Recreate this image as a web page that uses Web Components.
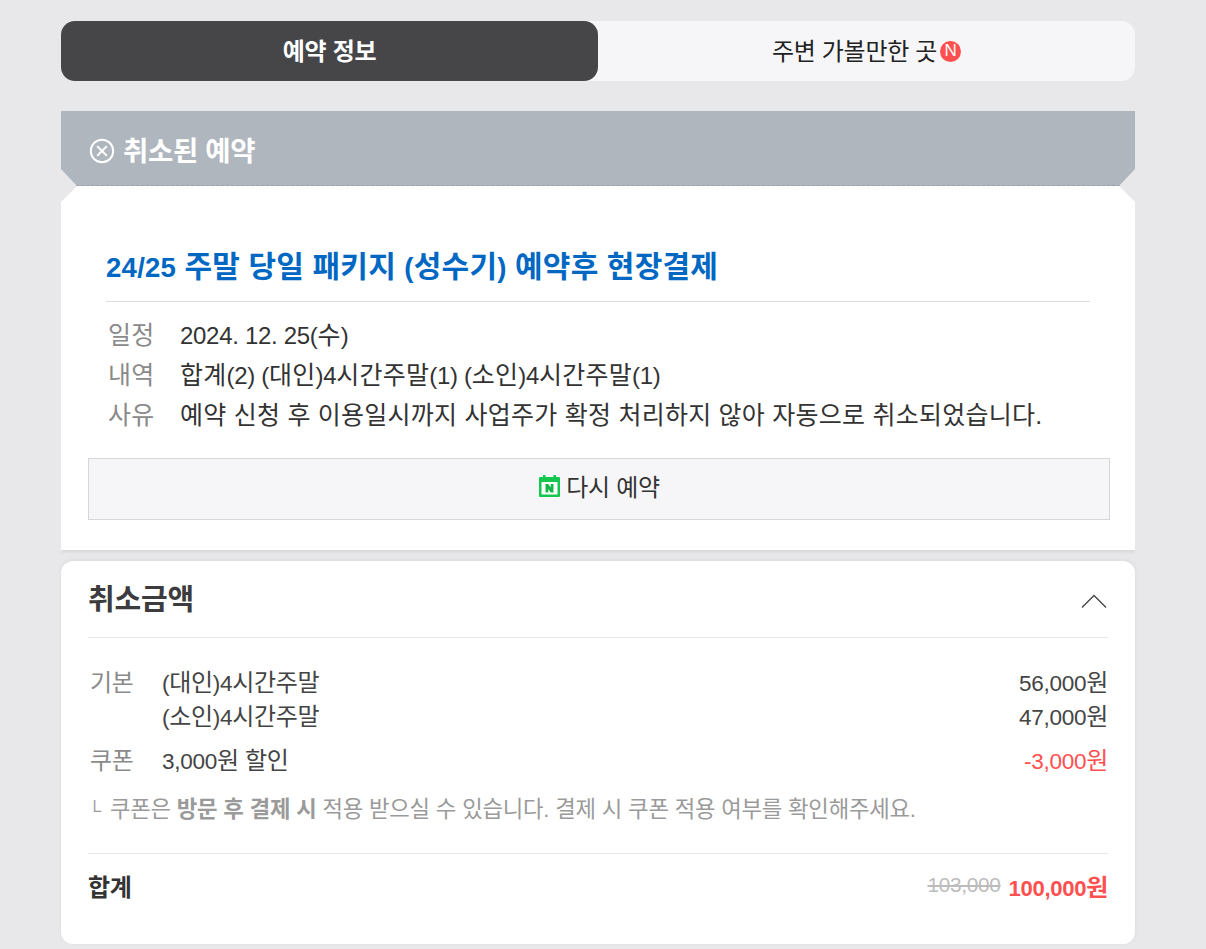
<!doctype html>
<html lang="ko">
<head>
<meta charset="UTF-8">
<title>예약 정보</title>
<style>
  html, body { margin: 0; background: #e8e8ea; }
  body {
    font-family: "Liberation Sans", "Noto Sans CJK KR", sans-serif;
    letter-spacing: -0.3px;
    padding: 21px 71px 5px 61px;
    display: flex;
    flex-direction: column;
  }
  /* latin runs sit a little smaller than the hangul next to them */
  .n { font-size: 0.96em; letter-spacing: -0.3px; }
  .m { font-size: 0.94em; letter-spacing: -0.3px; }
  .t { font-size: 0.92em; }
  .c { font-size: 0.92em; letter-spacing: -0.3px; }
  small { margin-right: 3px; }
</style>
</head>
<body>
<tab-bar>
  <span slot="active">예약 정보</span>
  <span slot="other">주변 가볼만한 곳</span>
</tab-bar>
<status-banner>취소된 예약</status-banner>
<booking-card>
  <span slot="heading"><span class="t">24/25</span> 주말 당일 패키지 <span class="t">(</span>성수기<span class="t">)</span> 예약후 현장결제</span>
  <info-row label="일정"><span class="n">2024. 12. 25(</span>수<span class="n">)</span></info-row>
  <info-row label="내역">합계<span class="n">(2) (</span>대인<span class="n">)4</span>시간주말<span class="n">(1) (</span>소인<span class="n">)4</span>시간주말<span class="n">(1)</span></info-row>
  <info-row label="사유">예약 신청 후 이용일시까지 사업주가 확정 처리하지 않아 자동으로 취소되었습니다.</info-row>
</booking-card>
<price-card heading="취소금액">
  <price-row label="기본"><span class="m">(</span>대인<span class="m">)4</span>시간주말<span slot="amount"><span class="m">56,000</span>원</span></price-row>
  <price-row><span class="m">(</span>소인<span class="m">)4</span>시간주말<span slot="amount"><span class="m">47,000</span>원</span></price-row>
  <price-row label="쿠폰" discount><span class="m">3,000</span>원 할인<span slot="amount"><span class="m">-3,000</span>원</span></price-row>
  <p slot="note"><small>└</small> 쿠폰은 <b>방문 후 결제 시</b> 적용 받으실 수 있습니다. 결제 시 쿠폰 적용 여부를 확인해주세요.</p>
  <span slot="old">103,000</span>
  <span slot="total"><span class="c">100,000</span>원</span>
</price-card>

<template id="tab-bar">
  <style>
    :host { display: flex; height: 60px; background: #f6f6f8; border-radius: 14px; font-size: 24px; }
    div { flex: 1; display: flex; align-items: center; justify-content: center; padding-bottom: 4px; box-sizing: border-box; color: #222; }
    .on { background: #464648; color: #fff; font-weight: 700; border-radius: 14px; }
    .badge {
      width: 21px; height: 21px; margin-left: 3px; margin-top: 4px; border-radius: 50%;
      background: #ff5050; color: #fff; font-size: 17px; letter-spacing: 0;
      display: flex; align-items: center; justify-content: center;
    }
  </style>
  <div class="on"><slot name="active"></slot></div>
  <div><slot name="other"></slot><span class="badge">N</span></div>
</template>

<template id="status-banner">
  <style>
    :host {
      display: flex; align-items: center; gap: 8px; height: 75px; margin-top: 30px; padding: 1px 29px 0 28px;
      box-sizing: border-box; background: #b0b6be; color: #fff; font-size: 27.5px; font-weight: 700;
      border-bottom: 1px dashed #9a9fa7;
      clip-path: polygon(0 0, 100% 0, 100% 58px, calc(100% - 16px) 100%, 16px 100%, 0 58px);
    }
    svg { width: 26px; height: 26px; flex: none; margin-top: 4px; }
  </style>
  <svg viewBox="0 0 26 26" fill="none" stroke="#fff" stroke-width="2">
    <circle cx="13" cy="13" r="11.2"/>
    <path d="M8.2 8.2l9.600 9.600M17.800 8.200l-9.600 9.600"/>
  </svg>
  <slot></slot>
</template>

<template id="booking-card">
  <style>
    :host {
      display: block; background: #fff; padding: 47px 25px 30px 27px; height: 364px; box-sizing: border-box;
      box-shadow: 0 2px 3px rgba(0,0,0,.08);
      clip-path: polygon(16px 0, calc(100% - 16px) 0, 100% 16px, 100% calc(100% + 6px), 0 calc(100% + 6px), 0 16px);
    }
    h2 {
      margin: 0 0 0 18px; border-bottom: 1px solid #dcdcdc; height: 68px; width: 984px; white-space: nowrap;
      font-size: 30px; line-height: 68px; font-weight: 700; color: #0068c3; letter-spacing: 0.22px; word-spacing: -0.2px;
    }
    .rows { margin: 11px 0 25px 20px; }
    button {
      display: flex; align-items: center; justify-content: center; gap: 5px; width: 100%; height: 62px;
      background: #f6f6f8; border: 1px solid #d6d6d6; font: inherit; font-size: 24px; color: #333; padding: 0 0 7px;
      letter-spacing: -0.3px;
    }
    svg { width: 23px; height: 24px; flex: none; }
  </style>
  <h2><slot name="heading"></slot></h2>
  <div class="rows"><slot></slot></div>
  <button type="button">
    <svg viewBox="0 0 23 24">
      <path fill="#14c84f" d="M2 3h3V1h2.500v2h8V1H18v2h3a1 1 0 0 1 1 1v18a1 1 0 0 1-1 1H2a1 1 0 0 1-1-1V4a1 1 0 0 1 1-1z"/>
      <rect x="3.500" y="8" width="16" height="12.500" fill="#fff"/>
      <path fill="#14b84a" d="M7.500 10h2.800l2.400 3.600V10h2.800v8.500h-2.800l-2.400-3.600v3.600H7.500z"/>
    </svg>
    <span>다시 예약</span>
  </button>
</template>

<template id="info-row">
  <style>
    :host { display: flex; height: 40px; align-items: center; font-size: 25px; letter-spacing: 0.25px; color: #333; white-space: nowrap; }
    .label { width: 72px; flex: none; color: #8a8a8a; }
  </style>
  <span class="label"></span><span><slot></slot></span>
</template>

<template id="price-card">
  <style>
    :host {
      display: block; margin-top: 11px; background: #fff; border-radius: 12px; padding: 0 27px; height: 383px;
      box-sizing: border-box; box-shadow: 0 -1px 4px rgba(0,0,0,.06);
    }
    header {
      display: flex; align-items: center; justify-content: space-between; height: 76px;
      border-bottom: 1px solid #e8e8e8;
    }
    h3 { margin: 0 0 4px; font-size: 29px; font-weight: 700; color: #3c3c3e; letter-spacing: -0.2px; }
    svg { width: 26px; height: 16px; margin-right: 1px; margin-top: 3px; }
    .rows { padding-top: 25px; }
    ::slotted(p) {
      margin: 19px 0 0 0; font-size: 22.3px; line-height: 32px; color: #9a9a9a; letter-spacing: -0.22px; white-space: nowrap;
    }
    footer {
      display: flex; align-items: center; margin-top: 26px; height: 69px; padding-bottom: 6px; box-sizing: border-box;
      border-top: 1px solid #e8e8e8; font-weight: 700; font-size: 24px; color: #333;
    }
    .sum { margin-left: auto; display: flex; align-items: center; gap: 8px; }
    .old { font-size: 20.800px; font-weight: 400; color: #bcbcbc; text-decoration: line-through; }
    .total { color: #ff5050; }
  </style>
  <header>
    <h3></h3>
    <svg viewBox="0 0 26 16" fill="none" stroke="#444" stroke-width="1.300"><path d="M1 14.500L13 2.500l12 12"/></svg>
  </header>
  <div class="rows"><slot></slot></div>
  <slot name="note"></slot>
  <footer>
    <span>합계</span>
    <span class="sum">
      <span class="old"><slot name="old"></slot></span>
      <span class="total"><slot name="total"></slot></span>
    </span>
  </footer>
</template>

<template id="price-row">
  <style>
    :host { display: flex; align-items: center; height: 34px; font-size: 24px; color: #444; white-space: nowrap; }
    :host([discount]) { margin-top: 10px; }
    .label { width: 72px; margin-left: 2px; flex: none; color: #8a8a8a; }
    .amount { margin-left: auto; }
    :host([discount]) .amount { color: #ff5050; }
  </style>
  <span class="label"></span><span><slot></slot></span><span class="amount"><slot name="amount"></slot></span>
</template>

<script>
  class Base extends HTMLElement {
    constructor() {
      super()
      const template = document.querySelector('#' + this.localName)
      this.attachShadow({mode: 'open'})
      this.shadowRoot.appendChild(template.content.cloneNode(true))
    }
    put(selector, attr) {
      const el = this.shadowRoot.querySelector(selector)
      el.textContent = this.getAttribute(attr) || ''
    }
  }
  class TabBar extends Base {}
  class StatusBanner extends Base {}
  class BookingCard extends Base {}
  class InfoRow extends Base {
    connectedCallback() { this.put('.label', 'label') }
  }
  class PriceCard extends Base {
    connectedCallback() { this.put('h3', 'heading') }
  }
  class PriceRow extends Base {
    connectedCallback() { this.put('.label', 'label') }
  }
  customElements.define('tab-bar', TabBar)
  customElements.define('status-banner', StatusBanner)
  customElements.define('booking-card', BookingCard)
  customElements.define('info-row', InfoRow)
  customElements.define('price-card', PriceCard)
  customElements.define('price-row', PriceRow)
</script>
</body>
</html>
